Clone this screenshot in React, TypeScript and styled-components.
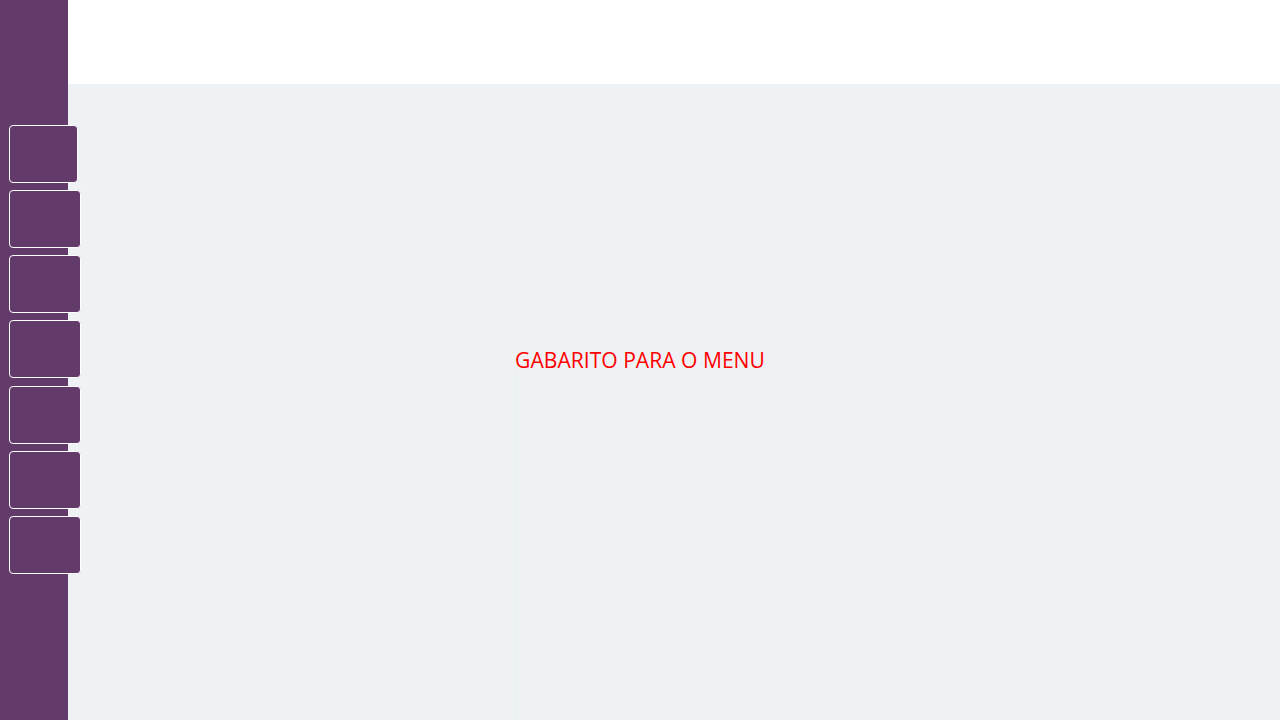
import React from "react";
import styled, { createGlobalStyle } from "styled-components";

const Global = createGlobalStyle`
  html, body { margin: 0; padding: 0; height: 100%; }
  body { font-family: "Open Sans", "Liberation Sans", sans-serif; overflow: hidden; }
  #root { height: 100%; }
`;

const Page = styled.div`
  display: flex;
  width: 1280px;
  height: 720px;
`;

const Sidebar = styled.nav`
  width: 68px;
  flex: 0 0 68px;
  background: #633b6b;
  display: flex;
  flex-direction: column;
  gap: 7.17px;
  padding: 125px 0 0 9px;
  box-sizing: border-box;
  position: relative;
  z-index: 2;
`;

const MenuButton = styled.button<{ $w: number }>`
  width: ${(p) => p.$w}px;
  height: 58px;
  flex: 0 0 58px;
  box-sizing: border-box;
  border: 1px solid #ffffff;
  border-radius: 4px;
  background: #633b6b;
  padding: 0;
  cursor: pointer;
`;

const Main = styled.div`
  flex: 1;
  display: flex;
  flex-direction: column;
`;

const Header = styled.header`
  height: 84px;
  flex: 0 0 84px;
  background: #ffffff;
`;

const Content = styled.main`
  flex: 1;
  background: #eef2f4;
  display: flex;
  justify-content: center;
  padding-right: 68px;
`;

const Column = styled.div`
  display: flex;
  flex-direction: column;
  padding-top: 262px;
`;

const Title = styled.h1`
  margin: 0;
  font-family: "Open Sans", "Liberation Sans", sans-serif;
  font-weight: 400;
  font-size: 21.1px;
  line-height: 28px;
  color: #ff0000;
  white-space: nowrap;
`;

const Guide = styled.div`
  flex: 1;
  border-left: 1px dotted #e4e9eb;
`;

const widths = [69, 72, 72, 72, 72, 72, 72];

export default function App() {
  return (
    <>
      <Global />
      <Page>
        <Sidebar>
          {widths.map((w, i) => (
            <MenuButton key={i} $w={w} aria-label={`menu ${i + 1}`} />
          ))}
        </Sidebar>
        <Main>
          <Header />
          <Content>
            <Column>
              <Title>GABARITO PARA O MENU</Title>
              <Guide />
            </Column>
          </Content>
        </Main>
      </Page>
    </>
  );
}
